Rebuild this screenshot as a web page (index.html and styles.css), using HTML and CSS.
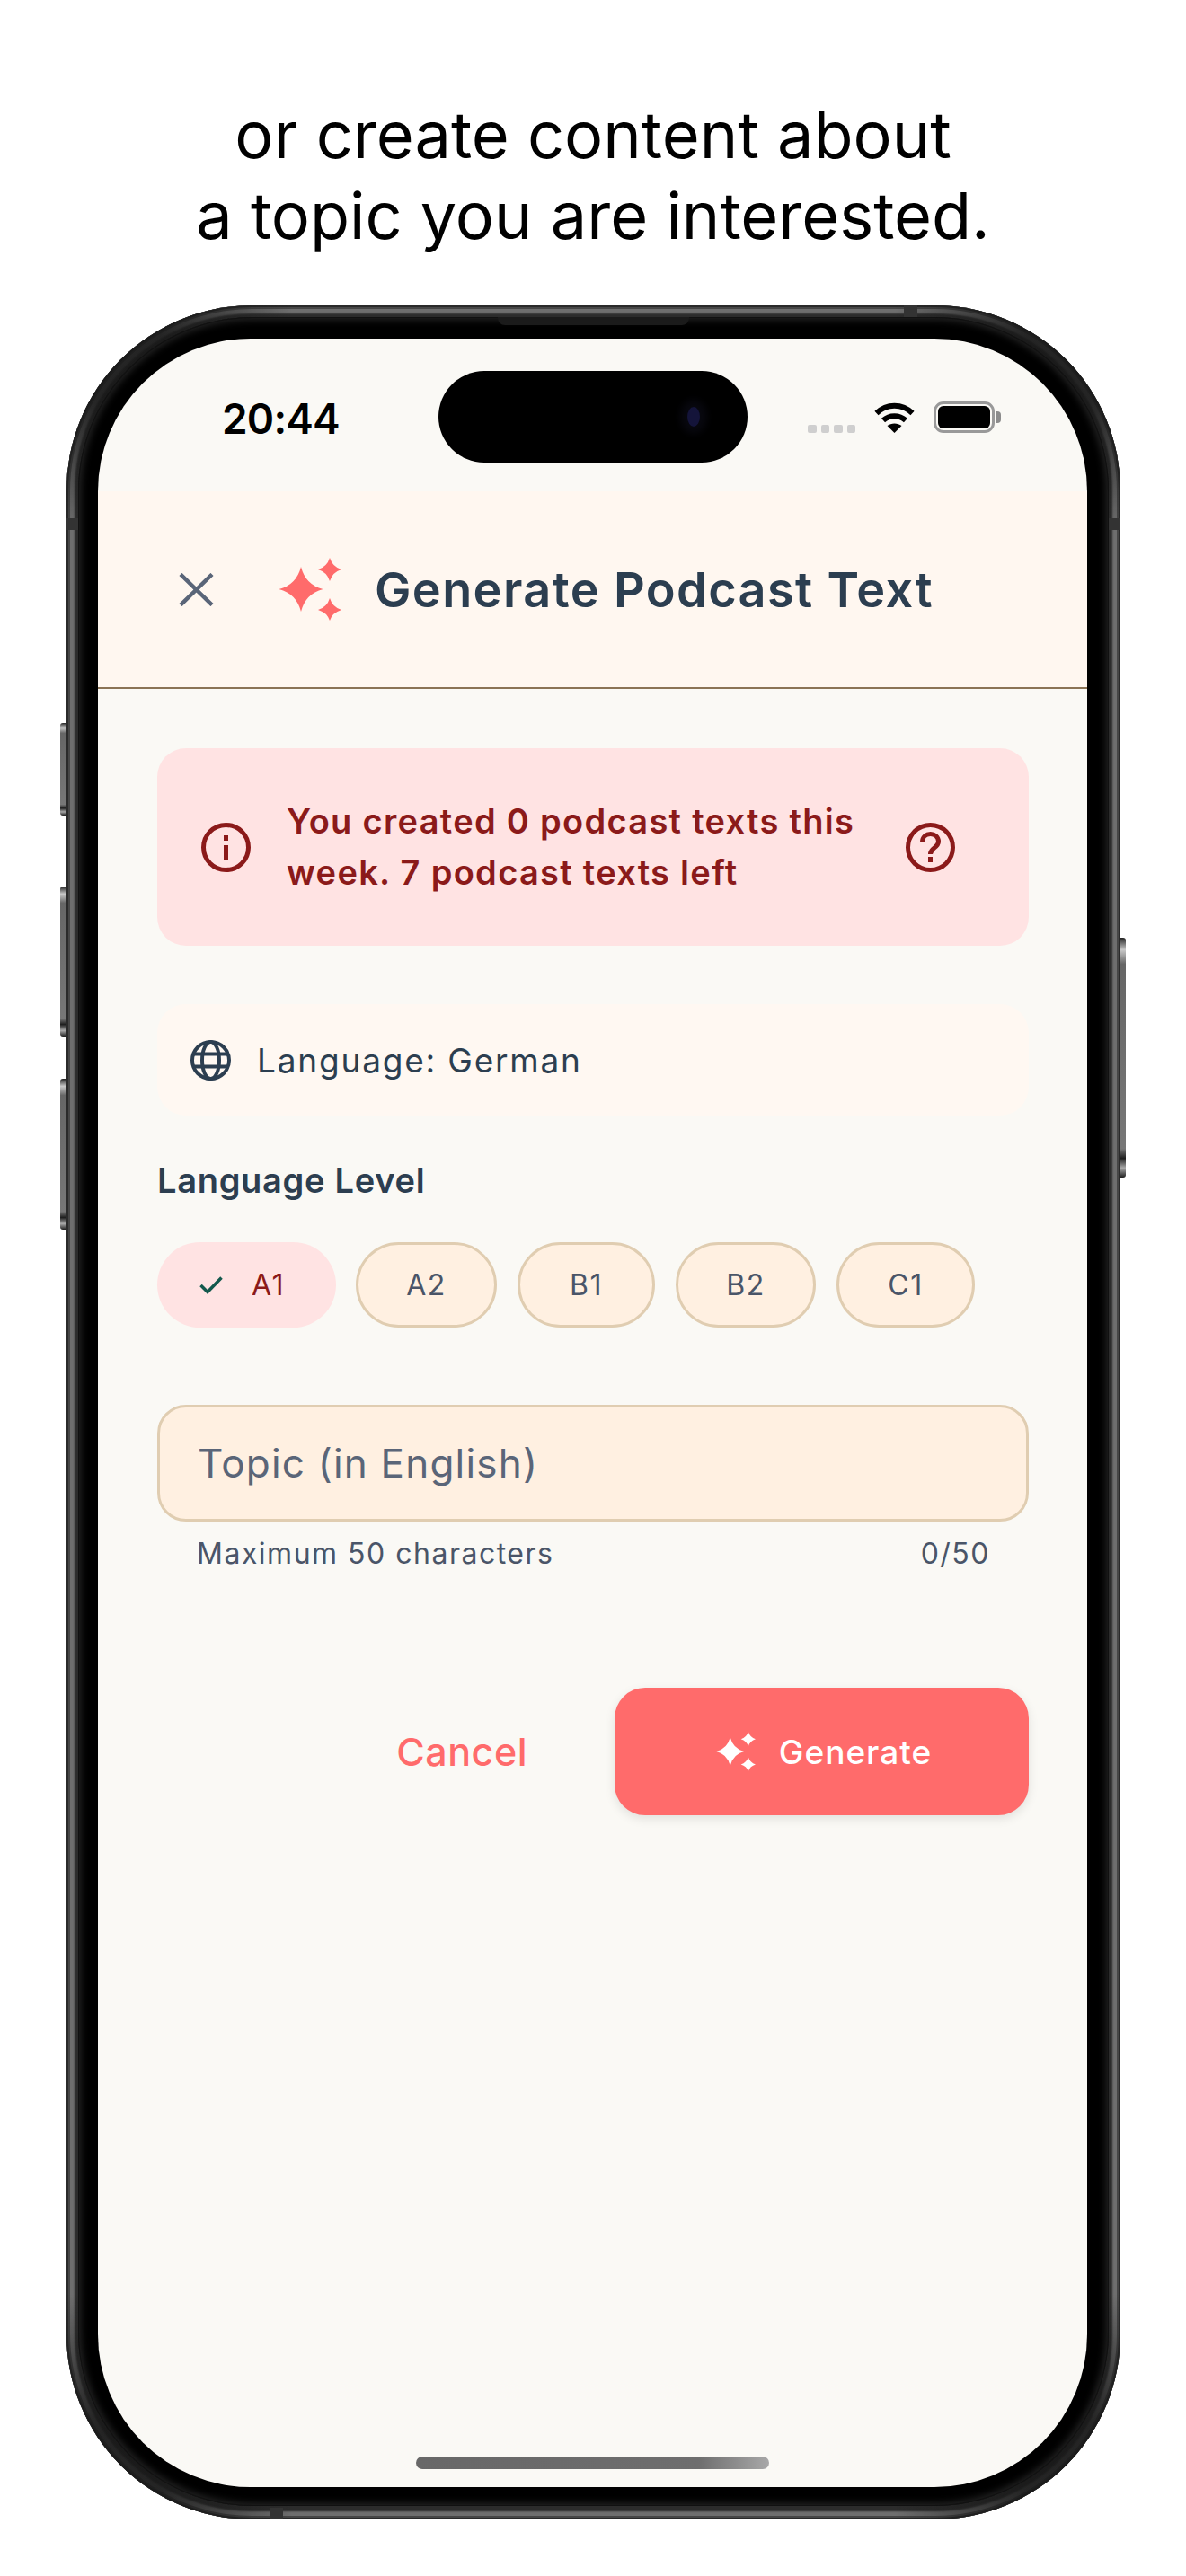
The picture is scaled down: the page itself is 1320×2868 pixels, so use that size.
FILE: index.html
```html
<!DOCTYPE html>

<html>

<head>
    <title> Generate Podcast Text </title>
    <link rel="stylesheet" href="styles.css">
</head>

<body>
    <svg class="defs" width="0" height="0">
        <symbol id="sparkle" viewBox="0 0 70 70">
            <path d="M25 10 Q30 30 49.500 35 Q30 40 25 60 Q20 40 0.500 35 Q20 30 25 10Z" />
            <path d="M57 0 Q60 10 70 13 Q60 16 57 26 Q54 16 44 13 Q54 10 57 0Z" />
            <path d="M57 45 Q60 55 70 58 Q60 61 57 70 Q54 61 44 58 Q54 55 57 45Z" />
        </symbol>
    </svg>

    <h1 class="headline">or create content about<br>a topic you are interested.</h1>

    <div class="phone">
        <span class="key key-action"></span>
        <span class="key key-up"></span>
        <span class="key key-down"></span>
        <span class="key key-power"></span>
        <span class="band band-top"></span>
        <span class="band band-left"></span>
        <span class="band band-right"></span>
        <span class="band band-bottom"></span>

        <div class="bezel">
            <span class="speaker"></span>
            <div class="screen">
                <div class="island"><span class="lens"></span></div>

                <div class="status">
                    <span class="time">20:44</span>
                    <div class="status-icons">
                        <div class="signal"><i></i><i></i><i></i><i></i></div>
                        <svg class="wifi" viewBox="0 0 47 34">
                            <path d="M3.500 12 C15 1, 32 1, 43.500 12" fill="none" stroke="#000" stroke-width="6" />
                            <path d="M11 20 C18 13.500, 29 13.500, 36 20" fill="none" stroke="#000" stroke-width="6" />
                            <path d="M23.500 34 L15.500 26 C20 22.500, 27 22.500, 31.500 26Z" />
                        </svg>
                        <div class="battery"><i></i></div>
                        <span class="battery-cap"></span>
                    </div>
                </div>

                <header class="appbar">
                    <svg class="close" viewBox="0 0 39 37">
                        <path d="M2 1.500 L37 35.500 M37 1.500 L2 35.500" />
                    </svg>
                    <svg class="sparkle sparkle-big"><use href="#sparkle" /></svg>
                    <h2 class="title">Generate Podcast Text</h2>
                </header>

                <main class="content">
                    <div class="alert">
                        <svg class="alert-icon" viewBox="0 0 55 55">
                            <circle cx="27.500" cy="27.500" r="25" />
                            <path d="M27.500 25 V41" />
                            <path d="M27.500 14 V20" />
                        </svg>
                        <p class="alert-text">You created 0 podcast texts this week. 7 podcast texts left</p>
                        <svg class="alert-icon" viewBox="0 0 55 55">
                            <circle cx="27.500" cy="27.500" r="25" />
                            <path d="M18.500 21.500 C18.500 9.500, 36.500 9.500, 36.500 21 C36.500 28, 27.500 27.500, 27.500 35" />
                            <path d="M27.500 38 V44" />
                        </svg>
                    </div>

                    <div class="language">
                        <svg class="globe" viewBox="0 0 45 45">
                            <circle cx="22.500" cy="22.500" r="20.500" />
                            <ellipse cx="22.500" cy="22.500" rx="9.500" ry="20.500" />
                            <path d="M3 15.500 H42 M3 29.500 H42" />
                        </svg>
                        <span>Language: German</span>
                    </div>

                    <h3 class="label">Language Level</h3>

                    <div class="chips">
                        <div class="chip chip-on">
                            <svg class="check" viewBox="0 0 26 20">
                                <path d="M1.500 10 L9 17.500 L24.500 1.500" />
                            </svg>
                            <span>A1</span>
                        </div>
                        <div class="chip chip-a2">A2</div>
                        <div class="chip chip-b1">B1</div>
                        <div class="chip chip-b2">B2</div>
                        <div class="chip chip-c1">C1</div>
                    </div>

                    <div class="field">Topic (in English)</div>
                    <div class="helper">
                        <span>Maximum 50 characters</span>
                        <span>0/50</span>
                    </div>

                    <div class="actions">
                        <span class="cancel">Cancel</span>
                        <div class="generate">
                            <svg class="sparkle sparkle-small"><use href="#sparkle" /></svg>
                            <span>Generate</span>
                        </div>
                    </div>
                </main>

                <div class="home"></div>
            </div>
        </div>
    </div>
</body>

</html>
```

FILE: styles.css
```css
* {
    box-sizing: border-box;
}

body {
    margin: 0;
    background: #fff;
    font-family: Inter, "Noto Sans", sans-serif;
    overflow: hidden;
}

.defs {
    display: block;
}

.headline {
    margin: 0;
    padding-top: 105px;
    height: 340px;
    text-align: center;
    font-size: 72px;
    font-weight: 400;
    line-height: 90px;
    color: #000;
}

/* device */

.phone {
    position: relative;
    width: 1173px;
    height: 2465px;
    margin-left: 74px;
    padding: 13px 13px 15px;
    border-radius: 206px;
    background: #2c2c2c;
    box-shadow: inset 0 0 0 2px #2a2a2a, inset 0 0 0 4px #464646, inset 0 0 2px 9px #6e6e6e;
}

/* the metal band reads darker round the corners */
.phone::before {
    content: "";
    position: absolute;
    inset: 0;
    border-radius: inherit;
    background:
        radial-gradient(circle at 0 0, rgba(24, 24, 24, 0.85) 110px, transparent 250px) 0 0 / 260px 260px no-repeat,
        radial-gradient(circle at 100% 0, rgba(24, 24, 24, 0.85) 110px, transparent 250px) 100% 0 / 260px 260px no-repeat,
        radial-gradient(circle at 0 100%, rgba(24, 24, 24, 0.85) 110px, transparent 250px) 0 100% / 260px 260px no-repeat,
        radial-gradient(circle at 100% 100%, rgba(24, 24, 24, 0.85) 110px, transparent 250px) 100% 100% / 260px 260px no-repeat;
}

.bezel {
    position: relative;
    height: 100%;
    padding: 24px 24px 21px 22px;
    border-radius: 194px;
    background: #000;
    box-shadow: inset 0 0 0 1px #111, inset 0 0 9px 3px #262626;
}

.key {
    position: absolute;
    width: 7px;
    background: linear-gradient(180deg, #222, #c9c9c9 5%, #666 11%, #777 88%, #1e1e1e 92%, #aaa 96%, #1e1e1e);
}

.key-action,
.key-up,
.key-down {
    left: -7px;
    border-radius: 3px 0 0 3px;
}

.key-action {
    top: 465px;
    height: 103px;
}

.key-up {
    top: 647px;
    height: 167px;
}

.key-down {
    top: 861px;
    height: 168px;
}

.key-power {
    top: 704px;
    right: -6px;
    width: 6px;
    height: 267px;
    border-radius: 0 3px 3px 0;
}

.band {
    position: absolute;
    z-index: 1;
    background: #333;
}

.band-top {
    top: 0;
    left: 932px;
    width: 15px;
    height: 13px;
}

.band-bottom {
    bottom: 0;
    left: 227px;
    width: 14px;
    height: 13px;
}

.band-left {
    top: 237px;
    left: 0;
    width: 13px;
    height: 13px;
}

.band-right {
    top: 237px;
    right: 0;
    width: 13px;
    height: 13px;
}

.speaker {
    position: absolute;
    top: 0;
    left: 467px;
    width: 213px;
    height: 9px;
    border-radius: 0 0 8px 8px;
    background: #1b1b1b;
}

.screen {
    position: relative;
    display: flex;
    flex-direction: column;
    height: 100%;
    border-radius: 170px;
    background: #faf9f5;
    overflow: hidden;
}

.island {
    position: absolute;
    top: 36px;
    left: 379px;
    width: 344px;
    height: 102px;
    border-radius: 51px;
    background: #000;
}

.lens {
    position: absolute;
    top: 40px;
    left: 277px;
    width: 14px;
    height: 22px;
    border-radius: 50%;
    background: #14143a;
    box-shadow: 0 0 8px 8px #08080f;
}

/* status bar */

.status {
    display: flex;
    justify-content: space-between;
    height: 170px;
    padding: 66px 96px 0 138px;
}

.time {
    font-size: 46px;
    font-weight: 600;
    line-height: 46px;
    letter-spacing: -0.800px;
    color: #000;
}

.status-icons {
    display: flex;
    align-items: flex-end;
    height: 35px;
    margin-top: 4px;
}

.signal {
    display: flex;
    gap: 5px;
    margin-right: 20px;
}

.signal i {
    width: 9.500px;
    height: 9px;
    border-radius: 2px;
    background: #cfcfcf;
}

.wifi {
    width: 47px;
    height: 34px;
    margin-right: 20px;
}

.battery {
    width: 68px;
    height: 35px;
    padding: 2px;
    border: 3.500px solid #999;
    border-radius: 11px;
}

.battery i {
    display: block;
    height: 100%;
    border-radius: 6px;
    background: #000;
}

.battery-cap {
    width: 5px;
    height: 13px;
    margin: 0 0 11px 2px;
    border-radius: 0 4px 4px 0;
    background: #8c8c8c;
}

/* app bar */

.appbar {
    display: flex;
    align-items: center;
    height: 220px;
    padding-left: 90px;
    background: #fff7f0;
    border-bottom: 2px solid #8b7355;
}

.close {
    width: 39px;
    height: 37px;
    margin-right: 72px;
    fill: none;
    stroke: #5a6578;
    stroke-width: 4.500;
}

.sparkle-big {
    width: 70px;
    height: 70px;
    margin-right: 37px;
    fill: #ff6b6b;
}

.title {
    margin: 0;
    font-size: 54px;
    font-weight: 600;
    letter-spacing: 1.400px;
    color: #2c3e50;
}

/* form */

.content {
    flex: 1;
    padding: 66px 65px 0 66px;
}

.alert {
    display: flex;
    align-items: center;
    height: 220px;
    padding: 0 82px 0 49px;
    border-radius: 32px;
    background: #ffe3e3;
    color: #8b1a1a;
}

.alert-icon {
    flex: none;
    width: 55px;
    height: 55px;
    fill: none;
    stroke: #8b1a1a;
    stroke-width: 5;
}

.alert-text {
    flex: 1;
    margin: 0 28px 0 40px;
    font-size: 38px;
    font-weight: 600;
    line-height: 57px;
    letter-spacing: 1.300px;
}

.language {
    display: flex;
    align-items: center;
    gap: 29px;
    height: 124px;
    margin-top: 65px;
    padding-left: 37px;
    border-radius: 32px;
    background: #fff8f2;
    font-size: 37px;
    letter-spacing: 1.800px;
    color: #2c3e50;
}

.globe {
    width: 45px;
    height: 45px;
    fill: none;
    stroke: #2c3e50;
    stroke-width: 4;
}

.label {
    margin: 48px 0 45px;
    font-size: 38px;
    font-weight: 600;
    line-height: 48px;
    letter-spacing: 0.700px;
    color: #2c3e50;
}

.chips {
    display: flex;
    gap: 23px;
}

.chip {
    display: flex;
    align-items: center;
    justify-content: center;
    height: 95px;
    border: 3px solid #e0cdb1;
    border-radius: 48px;
    background: #fff0e1;
    font-size: 32px;
    letter-spacing: 1.500px;
    color: #4a5568;
}

.chip-on {
    gap: 32px;
    width: 199px;
    margin-right: -1px;
    padding-right: 10px;
    border: none;
    background: #ffe3e3;
    color: #8b1a1a;
}

.chip-a2 {
    width: 157px;
}

.chip-b1 {
    width: 153px;
}

.chip-b2 {
    width: 156px;
}

.chip-c1 {
    width: 154px;
}

.check {
    width: 26px;
    height: 20px;
    fill: none;
    stroke: #14594d;
    stroke-width: 3.500;
}

.field {
    display: flex;
    align-items: center;
    height: 130px;
    margin-top: 86px;
    padding-left: 42px;
    border: 3px solid #e0cdb1;
    border-radius: 32px;
    background: #fff0e1;
    font-size: 44px;
    letter-spacing: 1.200px;
    color: #5a6578;
}

.helper {
    display: flex;
    justify-content: space-between;
    margin-top: 16px;
    padding: 0 43px 0 44px;
    font-size: 32px;
    line-height: 40px;
    letter-spacing: 1.500px;
    color: #4a5568;
}

.actions {
    display: flex;
    align-items: center;
    justify-content: flex-end;
    margin-top: 129px;
}

.cancel {
    margin-right: 97px;
    font-size: 43px;
    font-weight: 500;
    letter-spacing: 0.500px;
    color: #ff6b6b;
}

.generate {
    display: flex;
    align-items: center;
    justify-content: center;
    gap: 26px;
    width: 461px;
    height: 142px;
    padding-left: 5px;
    border-radius: 34px;
    background: #ff6b6b;
    box-shadow: 0 4px 12px rgba(0, 0, 0, 0.1);
    font-size: 37px;
    font-weight: 500;
    letter-spacing: 1px;
    color: #fff;
}

.sparkle-small {
    width: 44px;
    height: 44px;
    fill: #fff;
}

.home {
    flex: none;
    width: 393px;
    height: 14px;
    margin: 0 auto 20px;
    border-radius: 7px;
    background: linear-gradient(90deg, #686868, #6e6e6e 80%, #a8a8a8);
}
```
